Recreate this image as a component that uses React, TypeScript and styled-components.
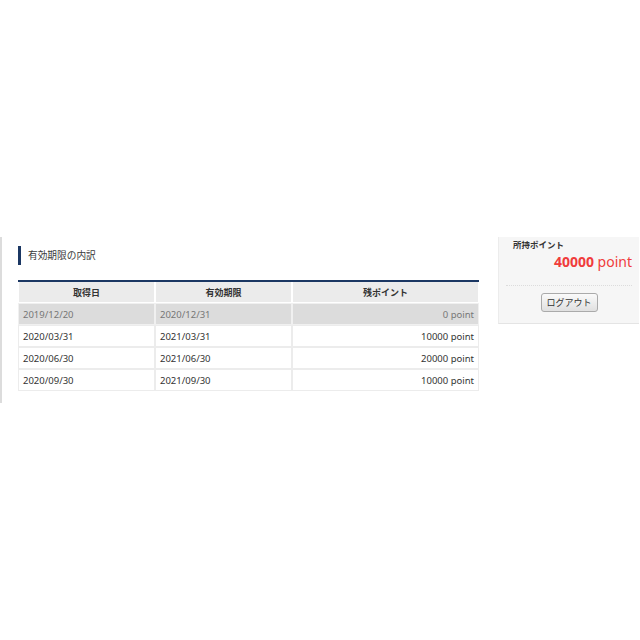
import React from "react";
import styled, { createGlobalStyle } from "styled-components";

const Global = createGlobalStyle`
  html, body { margin: 0; padding: 0; background: #fff; }
  body { font-family: "Noto Sans", "Noto Sans CJK JP", sans-serif; color: #333; }
`;

const Page = styled.div`
  display: flex;
  align-items: flex-start;
  padding-top: 237px;
`;

const Main = styled.div`
  width: 461px;
  border-left: 2px solid #dcdcdc;
  padding: 9px 19px 12px 16px;
`;

const Heading = styled.h2`
  margin: 0 0 15px 0;
  height: 19px;
  border-left: 3px solid #1b3763;
  padding-left: 7px;
  font-size: 9.7px;
  font-weight: normal;
  line-height: 19px;
  color: #3a3a3a;
  font-family: "Noto Sans CJK JP", sans-serif;
`;

const Table = styled.table`
  width: 461px;
  border-collapse: separate;
  border-spacing: 0;
  border-top: 2px solid #1b3763;
  font-size: 9.5px;
`;

const Th = styled.th<{ $w?: number }>`
  width: ${(p) => (p.$w ? `${p.$w}px` : "auto")};
  background: #ebebeb;
  height: 20px;
  padding: 0;
  font-weight: bold;
  font-size: 9px;
  color: #333;
  border: 1px solid #fff;
  border-top: none;
  font-family: "Noto Sans CJK JP", sans-serif;
`;

const Td = styled.td<{ $muted?: boolean; $right?: boolean }>`
  height: 20px;
  padding: 0 4px;
  background: ${(p) => (p.$muted ? "#dcdcdc" : "#fff")};
  color: ${(p) => (p.$muted ? "#777" : "#333")};
  text-align: ${(p) => (p.$right ? "right" : "left")};
  border: 1px solid ${(p) => (p.$muted ? "#f0f0f0" : "#ececec")};
  white-space: nowrap;
`;

const Side = styled.aside`
  width: 141px;
  background: #f6f6f6;
  border-left: 1px solid #ececec;
  border-bottom: 1px solid #e4e4e4;
  padding: 1px 7px 10px 7px;
  box-sizing: border-box;
  height: 87px;
`;

const SideLabel = styled.div`
  font-family: "Noto Sans CJK JP", sans-serif;
  font-size: 8.5px;
  font-weight: bold;
  color: #333;
  padding-left: 7px;
  line-height: 12px;
`;

const Points = styled.div`
  text-align: right;
  color: #f03c3c;
  font-size: 14px;
  line-height: 19px;
  margin-top: 2px;
`;

const Num = styled.span`
  font-weight: bold;
`;

const Divider = styled.div`
  border-top: 1px dotted #dcdcdc;
  margin: 14px 0 7px 0;
`;

const BtnRow = styled.div`
  display: flex;
  justify-content: center;
`;

const Button = styled.button`
  width: 57px;
  height: 19px;
  padding: 0;
  font-family: "Noto Sans CJK JP", sans-serif;
  font-size: 9px;
  color: #333;
  border: 1px solid #aaa;
  border-radius: 3px;
  background: linear-gradient(#fafafa, #e0e0e0);
`;

const rows = [
  ["2019/12/20", "2020/12/31", "0 point", true],
  ["2020/03/31", "2021/03/31", "10000 point", false],
  ["2020/06/30", "2021/06/30", "20000 point", false],
  ["2020/09/30", "2021/09/30", "10000 point", false],
] as const;

export default function App() {
  return (
    <>
      <Global />
      <Page>
        <Main>
          <Heading>有効期限の内訳</Heading>
          <Table>
            <thead>
              <tr>
                <Th $w={135}>取得日</Th>
                <Th $w={135}>有効期限</Th>
                <Th>残ポイント</Th>
              </tr>
            </thead>
            <tbody>
              {rows.map(([a, b, c, m]) => (
                <tr key={a}>
                  <Td $muted={m}>{a}</Td>
                  <Td $muted={m}>{b}</Td>
                  <Td $muted={m} $right>{c}</Td>
                </tr>
              ))}
            </tbody>
          </Table>
        </Main>
        <Side>
          <SideLabel>所持ポイント</SideLabel>
          <Points>
            <Num>40000</Num> point
          </Points>
          <Divider />
          <BtnRow>
            <Button>ログアウト</Button>
          </BtnRow>
        </Side>
      </Page>
    </>
  );
}
